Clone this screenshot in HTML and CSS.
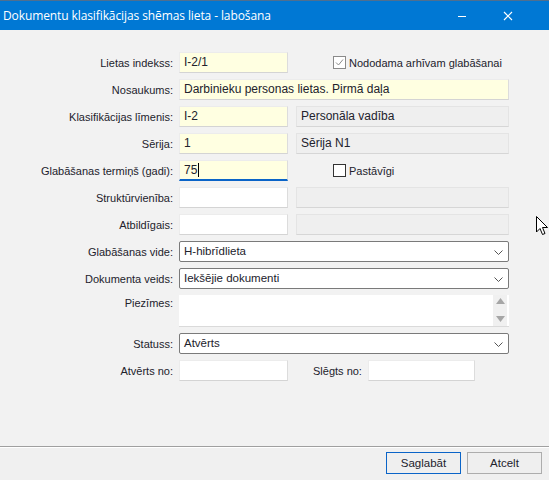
FILE: index.html
```
<!DOCTYPE html>
<html lang="lv">

<head>
    <meta charset="UTF-8">
    <title>Dokumentu klasifikācijas shēmas lieta - labošana</title>
    <link rel="stylesheet" href="styles.css">
</head>

<body>
    <div class="window">
        <div class="titlebar">
            <span class="title">Dokumentu klasifikācijas shēmas lieta - labošana</span>
            <span class="controls">
                <svg class="btn-min" width="46" height="29" viewBox="0 0 46 29">
                    <line x1="19" y1="15.5" x2="27" y2="15.5" stroke="#fff" stroke-width="1" />
                </svg>
                <svg class="btn-close" width="46" height="29" viewBox="0 0 46 29">
                    <path d="M19 11 L27 19 M27 11 L19 19" stroke="#fff" stroke-width="1.2" fill="none" />
                </svg>
            </span>
        </div>

        <div class="form">
            <div class="row">
                <label class="label">Lietas indekss:</label>
                <div class="field short req">I-2/1</div>
                <div class="check-wrap">
                    <span class="checkbox disabled">
                        <svg width="11" height="11" viewBox="0 0 11 11">
                            <path d="M2 5.5 L4.5 8 L9 2.5" stroke="#8c8c8c" stroke-width="1" fill="none" />
                        </svg>
                    </span>
                    <span>Nododama arhīvam glabāšanai</span>
                </div>
            </div>
            <div class="row">
                <label class="label">Nosaukums:</label>
                <div class="field wide req">Darbinieku personas lietas. Pirmā daļa</div>
            </div>
            <div class="row">
                <label class="label">Klasifikācijas līmenis:</label>
                <div class="field short req">I-2</div>
                <div class="field side ro">Personāla vadība</div>
            </div>
            <div class="row">
                <label class="label">Sērija:</label>
                <div class="field short req">1</div>
                <div class="field side ro">Sērija N1</div>
            </div>
            <div class="row">
                <label class="label">Glabāšanas termiņš (gadi):</label>
                <div class="field short req focused">75<span class="caret"></span></div>
                <div class="check-wrap">
                    <span class="checkbox"></span>
                    <span>Pastāvīgi</span>
                </div>
            </div>
            <div class="row">
                <label class="label">Struktūrvienība:</label>
                <div class="field short"></div>
                <div class="field side ro"></div>
            </div>
            <div class="row">
                <label class="label">Atbildīgais:</label>
                <div class="field short"></div>
                <div class="field side ro"></div>
            </div>
            <div class="row">
                <label class="label">Glabāšanas vide:</label>
                <div class="select wide">H-hibrīdlieta<svg class="chev" width="9" height="5" viewBox="0 0 9 5"><path d="M0.5 0.5 L4.5 4.5 L8.5 0.5" stroke="#555" fill="none" /></svg></div>
            </div>
            <div class="row">
                <label class="label">Dokumenta veids:</label>
                <div class="select wide">Iekšējie dokumenti<svg class="chev" width="9" height="5" viewBox="0 0 9 5"><path d="M0.5 0.5 L4.5 4.5 L8.5 0.5" stroke="#555" fill="none" /></svg></div>
            </div>
            <div class="row top">
                <label class="label">Piezīmes:</label>
                <div class="textarea wide">
                    <div class="scroll">
                        <svg width="9" height="6" viewBox="0 0 9 6"><path d="M0 6 L4.5 0 L9 6 Z" fill="#a6a6a6" /></svg>
                        <svg width="9" height="6" viewBox="0 0 9 6"><path d="M0 0 L4.5 6 L9 0 Z" fill="#a6a6a6" /></svg>
                    </div>
                </div>
            </div>
            <div class="row">
                <label class="label">Statuss:</label>
                <div class="select wide">Atvērts<svg class="chev" width="9" height="5" viewBox="0 0 9 5"><path d="M0.5 0.5 L4.5 4.5 L8.5 0.5" stroke="#555" fill="none" /></svg></div>
            </div>
            <div class="row last">
                <label class="label">Atvērts no:</label>
                <div class="field short"></div>
                <label class="label-inline">Slēgts no:</label>
                <div class="field date"></div>
            </div>
        </div>

        <div class="footer">
            <button class="button default">Saglabāt</button>
            <button class="button">Atcelt</button>
        </div>

        <!-- peles kursors -->
        <svg class="pointer" width="13" height="20" viewBox="0 0 13 20">
            <path d="M0.5 0.5 L0.5 16 L4 12.5 L6.5 18.5 L9 17.5 L6.5 11.5 L11.5 11.5 Z" fill="#fff" stroke="#000" stroke-width="1" stroke-linejoin="miter" />
        </svg>
    </div>
</body>

</html>
```

FILE: styles.css
```
body {
    margin: 0;
    font-family: "Liberation Sans", Arial, sans-serif;
    font-size: 11px;
    color: #22222c;
}

.window {
    position: relative;
    width: 549px;
    height: 480px;
    display: flex;
    flex-direction: column;
    background-color: #f2f2f2;
    overflow: hidden;
}

.titlebar {
    height: 29px;
    border-top: 1px solid #4f6f8f;
    background-color: #0078d4;
    color: #fff;
    display: flex;
    align-items: center;
    justify-content: space-between;
}

.title {
    padding-left: 3px;
    font-family: "Open Sans", sans-serif;
    font-size: 12px;
    letter-spacing: -0.1px;
}

.controls {
    display: flex;
    margin-right: 18px;
}

/* forma */
.form {
    flex: 1;
    padding-top: 22px;
}

.row {
    display: flex;
    align-items: center;
    height: 21px;
    margin-bottom: 6px;
}

.row.top {
    align-items: flex-start;
    height: 32px;
}

.row.top .label {
    padding-top: 2px;
}

.row.last {
    margin-top: 1px;
}

.label {
    width: 179px;
    padding-right: 6px;
    box-sizing: border-box;
    text-align: right;
    flex-shrink: 0;
    white-space: nowrap;
}

.label-inline {
    margin-left: 25px;
    width: 55px;
    white-space: nowrap;
}

.field {
    height: 21px;
    box-sizing: border-box;
    background-color: #fff;
    border: 1px solid #ececec;
    border-bottom-color: #d4d4d4;
    border-right-color: #dcdcdc;
    padding: 0 4px;
    font-size: 12px;
    line-height: 19px;
    white-space: nowrap;
    overflow: hidden;
}

.field.req {
    background-color: #ffffe1;
}

.field.ro {
    background-color: #efefef;
    border-color: #e4e4e4;
    border-bottom-color: #d6d6d6;
}

.field.focused {
    border-bottom: 2px solid #0a64c8;
    line-height: 18px;
}

.caret {
    display: inline-block;
    width: 1px;
    height: 14px;
    background-color: #000;
    vertical-align: -3px;
    margin-left: 1px;
}

.short {
    width: 109px;
}

.side {
    width: 213px;
    margin-left: 8px;
}

.wide {
    width: 330px;
}

.date {
    width: 107px;
}

.check-wrap {
    display: flex;
    align-items: center;
    margin-left: 45px;
    gap: 3px;
}

.checkbox {
    width: 13px;
    height: 13px;
    box-sizing: border-box;
    border: 1px solid #333;
    background-color: #fff;
    display: flex;
    align-items: center;
    justify-content: center;
}

.checkbox.disabled {
    border-color: #8a8a8a;
}

.select {
    position: relative;
    height: 21px;
    box-sizing: border-box;
    background-color: #fff;
    border: 1px solid #7a7a7a;
    border-radius: 2px;
    padding: 0 4px;
    font-size: 11.5px;
    line-height: 19px;
}

.chev {
    position: absolute;
    right: 5px;
    top: 8px;
}

.textarea {
    height: 32px;
    box-sizing: border-box;
    background-color: #fff;
    border-bottom: 1px solid #dadada;
    display: flex;
    justify-content: flex-end;
}

.scroll {
    width: 14px;
    margin-right: 2px;
    background-color: #f0f0f0;
    display: flex;
    flex-direction: column;
    align-items: center;
    justify-content: space-between;
    padding: 3px 0 4px;
    box-sizing: border-box;
}

/* apakšējā josla */
.footer {
    height: 34px;
    border-top: 1px solid #a0a0a0;
    box-shadow: inset 0 1px 0 #fff;
    background-color: #f0f0f0;
    display: flex;
    justify-content: flex-end;
    align-items: flex-start;
    padding: 5px 7px 0 0;
    gap: 6px;
    box-sizing: border-box;
}

.button {
    width: 75px;
    height: 22px;
    font-family: "Liberation Sans", Arial, sans-serif;
    font-size: 11.5px;
    color: #22222c;
    background-color: #efefef;
    border: 1px solid #adadad;
    padding: 0;
}

.button.default {
    border-color: #0a64c8;
}

.pointer {
    position: absolute;
    left: 536px;
    top: 216px;
}
```
